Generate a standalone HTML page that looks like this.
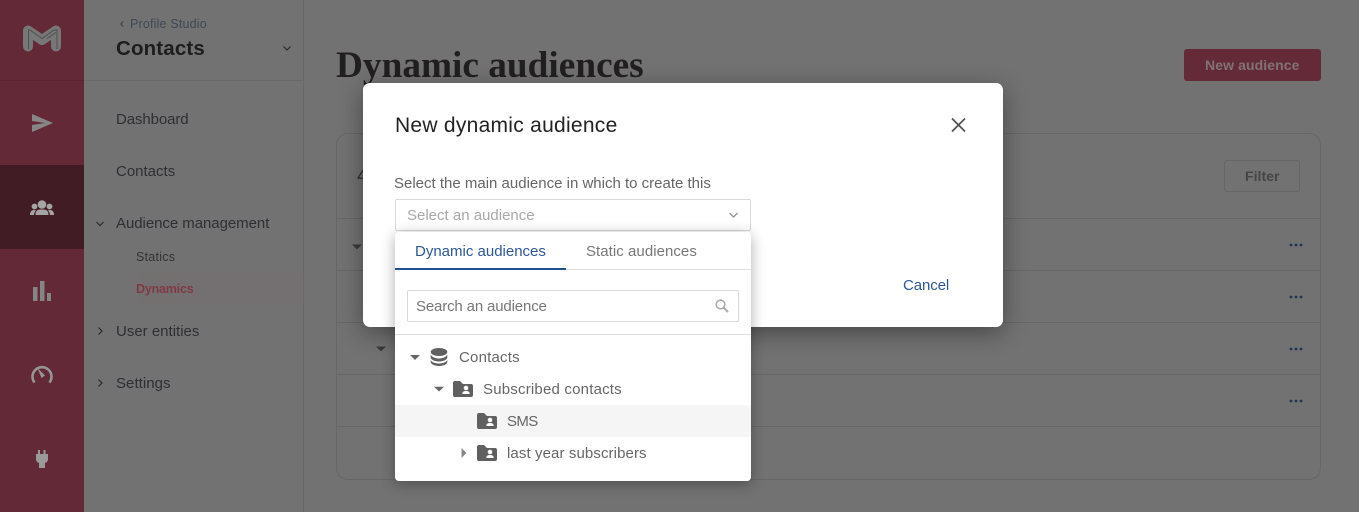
<!DOCTYPE html>
<html><head><meta charset="utf-8"><style>
*{box-sizing:border-box}
html,body{margin:0;padding:0;width:1359px;height:512px;overflow:hidden;background:#727272;font-family:"Liberation Sans",sans-serif}
.t{position:absolute;white-space:nowrap;line-height:20px;font-size:15px}
.a{position:absolute}
svg{position:absolute;overflow:visible}
</style></head><body>
<div class="a" style="left:0;top:0;width:84px;height:512px;background:#632936"></div>
<div class="a" style="left:0;top:80px;width:84px;height:1px;background:#5a2531"></div>
<div class="a" style="left:0;top:165px;width:84px;height:84px;background:#421c24"></div>
<div class="a" style="left:84px;top:80px;width:219px;height:1px;background:#696969"></div>
<div class="a" style="left:303px;top:0;width:1px;height:512px;background:#676767"></div>
<div class="a" style="left:116px;top:273px;width:187px;height:32px;background:linear-gradient(90deg,#727272,#746f70 30%,#746f70)"></div>

<svg style="left:0;top:0" width="84" height="512">
<path d="M28 46.500V30.500L42 40L56 30.500V46.500" fill="none" stroke="#777" stroke-width="10" stroke-linecap="round" stroke-linejoin="round"/>
<path d="M28.500 49V30H30L42 38.500L54 30H57V49M47 38.500L56 32.500" fill="none" stroke="#505050" stroke-width="1"/>
<path d="M32 114L53 123L32 132L32 125L45 123L32 121Z" fill="#868686"/>
<g fill="#a5a5a5"><circle cx="42" cy="204.500" r="4.300"/><circle cx="34.500" cy="206.500" r="2.900"/><circle cx="49.500" cy="206.500" r="2.900"/><path d="M35.500 215C35.500 210 38 209.500 42 209.500C46 209.500 48.500 210 48.500 215ZM30 215C30 211.500 31.500 210 34.500 210L36 210.500C34.500 212 34 213.500 34 215ZM54 215C54 211.500 52.500 210 49.500 210L48 210.500C49.500 212 50 213.500 50 215Z"/></g>
<g fill="#858585"><rect x="33" y="287" width="4.500" height="14"/><rect x="40" y="281" width="4.500" height="20"/><rect x="47" y="293" width="4" height="8"/></g>
<path d="M34.500 382.500A9.500 9.500 0 1 1 49.500 382.500" fill="none" stroke="#959595" stroke-width="2.600"/><path d="M37.500 368L45 375.500L41.500 378Z" fill="#959595"/>
<path d="M38 450H40V454H43.500V450H45.500V454H48V459Q48 462 45 463V468H39V463Q36 462 36 459V454H38Z" fill="#9a9a9a"/>
</svg>

<svg style="left:0;top:0" width="303" height="512" fill="none" stroke="#2a2a2a" stroke-width="1.200">
<path d="M123 21.500L121 24L123 26.500" stroke="#3d4652"/>
<path d="M283.500 46.500L287 50L290.500 46.500"/>
<path d="M96.500 222L100 225.500L103.500 222"/>
<path d="M98.500 327.500L102 331L98.500 334.500"/>
<path d="M98.500 379.500L102 383L98.500 386.500"/>
</svg>
<div class="t" style="left:130px;top:14px;font-size:12.500px;color:#3f4854;letter-spacing:.18px">Profile Studio</div>
<div class="t" style="left:116px;top:37px;font-size:20.500px;line-height:24px;font-weight:700;color:#1d1d1d;letter-spacing:.15px">Contacts</div>
<div class="t" style="left:116px;top:110px;color:#2f2f33;letter-spacing:-.1px">Dashboard</div>
<div class="t" style="left:116px;top:162px;color:#2f2f33">Contacts</div>
<div class="t" style="left:116px;top:214px;color:#2f2f33;letter-spacing:-.05px">Audience management</div>
<div class="t" style="left:136px;top:247px;font-size:12.500px;color:#333;letter-spacing:.25px">Statics</div>
<div class="t" style="left:136px;top:279px;font-size:12.500px;font-weight:700;color:#7f3a46;letter-spacing:-.2px">Dynamics</div>
<div class="t" style="left:116px;top:322px;color:#2f2f33">User entities</div>
<div class="t" style="left:116px;top:374px;color:#2f2f33;letter-spacing:.05px">Settings</div>

<div class="t" style="left:336px;top:44px;font-family:'Liberation Serif',serif;font-size:37.300px;line-height:44px;font-weight:700;color:#211f1f">Dynamic audiences</div>
<div class="a" style="left:1184px;top:49px;width:137px;height:32px;background:#652a37;border-radius:3px"></div>
<div class="t" style="left:1205px;top:55px;font-weight:700;font-size:14px;color:#807275;letter-spacing:.1px">New audience</div>

<div class="a" style="left:336px;top:133px;width:985px;height:347px;border:1px solid #676767;border-radius:12px"></div>
<div class="a" style="left:337px;top:218px;width:983px;height:1px;background:#676767"></div>
<div class="a" style="left:337px;top:270px;width:983px;height:1px;background:#676767"></div>
<div class="a" style="left:337px;top:322px;width:983px;height:1px;background:#676767"></div>
<div class="a" style="left:337px;top:374px;width:983px;height:1px;background:#676767"></div>
<div class="a" style="left:337px;top:426px;width:983px;height:1px;background:#676767"></div>
<div class="t" style="left:357px;top:166px;font-size:20px;color:#333">4</div>
<div class="a" style="left:1224px;top:160px;width:76px;height:32px;border:1px solid #676767;border-radius:3px"></div>
<div class="t" style="left:1245px;top:166px;font-weight:700;font-size:14px;color:#454545;letter-spacing:.05px">Filter</div>
<svg style="left:0;top:0" width="1359" height="512">
<path d="M352 244.500H362L357 249.500Z" fill="#3a3a3a"/>
<path d="M376 346.500H386L381 351.500Z" fill="#3a3a3a"/>
<g fill="#1f3553"><circle cx="1291" cy="245" r="1.400"/><circle cx="1296" cy="245" r="1.400"/><circle cx="1301" cy="245" r="1.400"/>
<circle cx="1291" cy="297" r="1.400"/><circle cx="1296" cy="297" r="1.400"/><circle cx="1301" cy="297" r="1.400"/>
<circle cx="1291" cy="349" r="1.400"/><circle cx="1296" cy="349" r="1.400"/><circle cx="1301" cy="349" r="1.400"/>
<circle cx="1291" cy="401" r="1.400"/><circle cx="1296" cy="401" r="1.400"/><circle cx="1301" cy="401" r="1.400"/></g>
</svg>

<div class="a" style="left:363px;top:83px;width:640px;height:244px;background:#fff;border-radius:7px;box-shadow:0 6px 24px rgba(0,0,0,.38)"></div>
<div class="t" style="left:395px;top:113px;font-size:21px;line-height:26px;color:#222;letter-spacing:.27px">New dynamic audience</div>
<svg style="left:0;top:0" width="1359" height="512"><path d="M952 118.500L965 131.500M965 118.500L952 131.500" stroke="#555" stroke-width="1.800" fill="none"/></svg>
<div class="t" style="left:394px;top:174px;color:#666">Select the main audience in which to create this</div>
<div class="a" style="left:395px;top:199px;width:356px;height:32px;background:#fff;border:1px solid #d9d9d9;border-radius:2px"></div>
<div class="t" style="left:407px;top:206px;color:#a8a8a8">Select an audience</div>
<svg style="left:0;top:0" width="1359" height="512"><path d="M729.500 213L733.500 217L737.500 213" stroke="#999" stroke-width="1.500" fill="none"/></svg>
<div class="t" style="left:903px;top:276px;color:#2b5797;letter-spacing:-.1px">Cancel</div>

<div class="a" style="left:395px;top:232px;width:356px;height:249px;background:#fff;border-radius:4px;box-shadow:0 3px 14px rgba(0,0,0,.32)"></div>
<div class="a" style="left:395px;top:269px;width:356px;height:1px;background:#dedede"></div>
<div class="a" style="left:395px;top:268px;width:171px;height:2px;background:#23508f"></div>
<div class="t" style="left:415px;top:242px;color:#2b5797">Dynamic audiences</div>
<div class="t" style="left:586px;top:242px;color:#777;letter-spacing:.05px">Static audiences</div>
<div class="a" style="left:407px;top:290px;width:332px;height:32px;border:1px solid #d9d9d9;border-radius:2px"></div>
<div class="t" style="left:416px;top:297px;color:#777;letter-spacing:-.15px">Search an audience</div>
<svg style="left:0;top:0" width="1359" height="512" fill="none"><circle cx="720.500" cy="304.500" r="4.300" stroke="#aaa" stroke-width="1.600"/><path d="M723.700 307.700L728 312" stroke="#aaa" stroke-width="2"/></svg>
<div class="a" style="left:395px;top:334px;width:356px;height:1px;background:#dedede"></div>
<div class="a" style="left:395px;top:405px;width:356px;height:32px;background:#f5f5f5"></div>
<svg style="left:0;top:0" width="1359" height="512">
<path d="M410 355H420L415 360Z" fill="#666"/>
<path d="M434 386.700H444L439 391.500Z" fill="#666"/>
<path d="M461.500 448V458L466.500 453Z" fill="#888"/>
<g fill="#606060">
<ellipse cx="439" cy="352" rx="8.300" ry="4"/>
<path d="M430.700 354.500C432 357.500 436 358.500 439 358.500C442 358.500 446 357.500 447.300 354.500V358C446 360.500 442 361.500 439 361.500C436 361.500 432 360.500 430.700 358Z"/>
<path d="M430.700 360C432 362.500 436 363.500 439 363.500C442 363.500 446 362.500 447.300 360V362.500C446 365 442 366 439 366C436 366 432 365 430.700 362.500Z"/>
</g>
<g>
<path d="M453 383Q453 381 455 381H460L463 384H471Q473 384 473 386V395Q473 397 471 397H455Q453 397 453 395Z" fill="#606060"/>
<circle cx="466" cy="388" r="2.300" fill="#fff"/><path d="M462.300 394C462.300 391.500 464 391 466 391C468 391 469.700 391.500 469.700 394Z" fill="#fff"/>
</g>
<g transform="translate(24,32)"><path d="M453 383Q453 381 455 381H460L463 384H471Q473 384 473 386V395Q473 397 471 397H455Q453 397 453 395Z" fill="#606060"/><circle cx="466" cy="388" r="2.300" fill="#fff"/><path d="M462.300 394C462.300 391.500 464 391 466 391C468 391 469.700 391.500 469.700 394Z" fill="#fff"/></g>
<g transform="translate(24,64)"><path d="M453 383Q453 381 455 381H460L463 384H471Q473 384 473 386V395Q473 397 471 397H455Q453 397 453 395Z" fill="#606060"/><circle cx="466" cy="388" r="2.300" fill="#fff"/><path d="M462.300 394C462.300 391.500 464 391 466 391C468 391 469.700 391.500 469.700 394Z" fill="#fff"/></g>
</svg>
<div class="t" style="left:459px;top:348px;color:#666;letter-spacing:.2px">Contacts</div>
<div class="t" style="left:483px;top:380px;color:#666;letter-spacing:.2px">Subscribed contacts</div>
<div class="t" style="left:507px;top:412px;color:#666;letter-spacing:-.6px">SMS</div>
<div class="t" style="left:507px;top:444px;color:#666;letter-spacing:.1px">last year subscribers</div>
</body></html>
